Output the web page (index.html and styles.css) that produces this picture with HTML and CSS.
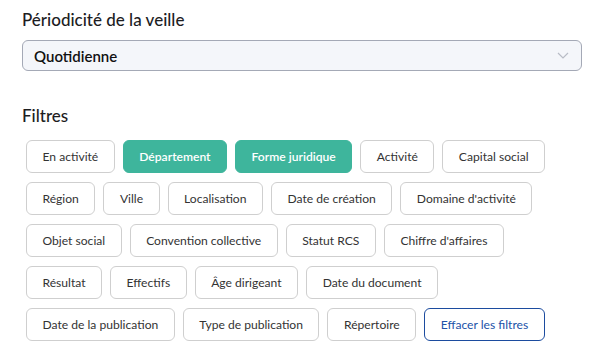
FILE: index.html
```html
<!DOCTYPE html>
<html lang="fr">
<head>
    <meta charset="UTF-8">
    <meta name="viewport" content="width=device-width, initial-scale=1.0">
    <title>Veille</title>
    <link rel="stylesheet" href="styles.css">
</head>
<body>
    <div class="panel">
        <div class="form-group">
            <label class="form-label">Périodicité de la veille</label>
            <div class="select">
                <span>Quotidienne</span>
                <svg class="chevron" width="12" height="7" viewBox="0 0 12 7">
                    <path d="M1 1 L6 6 L11 1" fill="none" stroke="#b8bcc6" stroke-width="1.2"/>
                </svg>
            </div>
        </div>

        <div class="form-group">
            <label class="form-label">Filtres</label>
            <div class="filters">
                <button class="chip">En activité</button>
                <button class="chip selected">Département</button>
                <button class="chip selected">Forme juridique</button>
                <button class="chip">Activité</button>
                <button class="chip">Capital social</button>
                <button class="chip">Région</button>
                <button class="chip">Ville</button>
                <button class="chip">Localisation</button>
                <button class="chip">Date de création</button>
                <button class="chip">Domaine d'activité</button>
                <button class="chip">Objet social</button>
                <button class="chip">Convention collective</button>
                <button class="chip">Statut RCS</button>
                <button class="chip">Chiffre d'affaires</button>
                <button class="chip">Résultat</button>
                <button class="chip">Effectifs</button>
                <button class="chip">Âge dirigeant</button>
                <button class="chip">Date du document</button>
                <button class="chip">Date de la publication</button>
                <button class="chip">Type de publication</button>
                <button class="chip">Répertoire</button>
                <button class="chip clear">Effacer les filtres</button>
            </div>
        </div>
    </div>
</body>
</html>
```

FILE: styles.css
```css
* {
    box-sizing: border-box;
    margin: 0;
    padding: 0;
}

body {
    font-family: Lato, "Noto Sans", sans-serif;
    background: #fff;
    color: #222;
}

.panel {
    width: 560px;
    margin: 0 0 0 22px;
    padding-top: 9px;
}

.form-group {
    margin-bottom: 34px;
}

.form-label {
    display: block;
    font-size: 17px;
    font-weight: 500;
    color: #1d1d1f;
    margin-bottom: 10px;
}

.select {
    display: flex;
    align-items: center;
    justify-content: space-between;
    height: 31px;
    padding: 0 12px 0 11px;
    background: #f4f6fa;
    border: 1px solid #a4a9b6;
    border-radius: 6px;
    font-size: 15px;
    font-weight: 600;
    color: #111;
}

.filters {
    display: flex;
    flex-wrap: wrap;
    gap: 9px 8px;
    padding: 4px 0 0 4px;
}

.chip {
    height: 33px;
    padding: 0 15.5px;
    background: #fff;
    border: 1px solid #cfcfcf;
    border-radius: 6px;
    font-family: Lato, "Noto Sans", sans-serif;
    font-size: 12.1px;
    color: #333;
    cursor: pointer;
}

.chip.selected {
    background: #3eb59c;
    border-color: #3eb59c;
    color: #fff;
    font-weight: 600;
}

.chip.clear {
    border-color: #1c4c9f;
    color: #2152a8;
}
```
